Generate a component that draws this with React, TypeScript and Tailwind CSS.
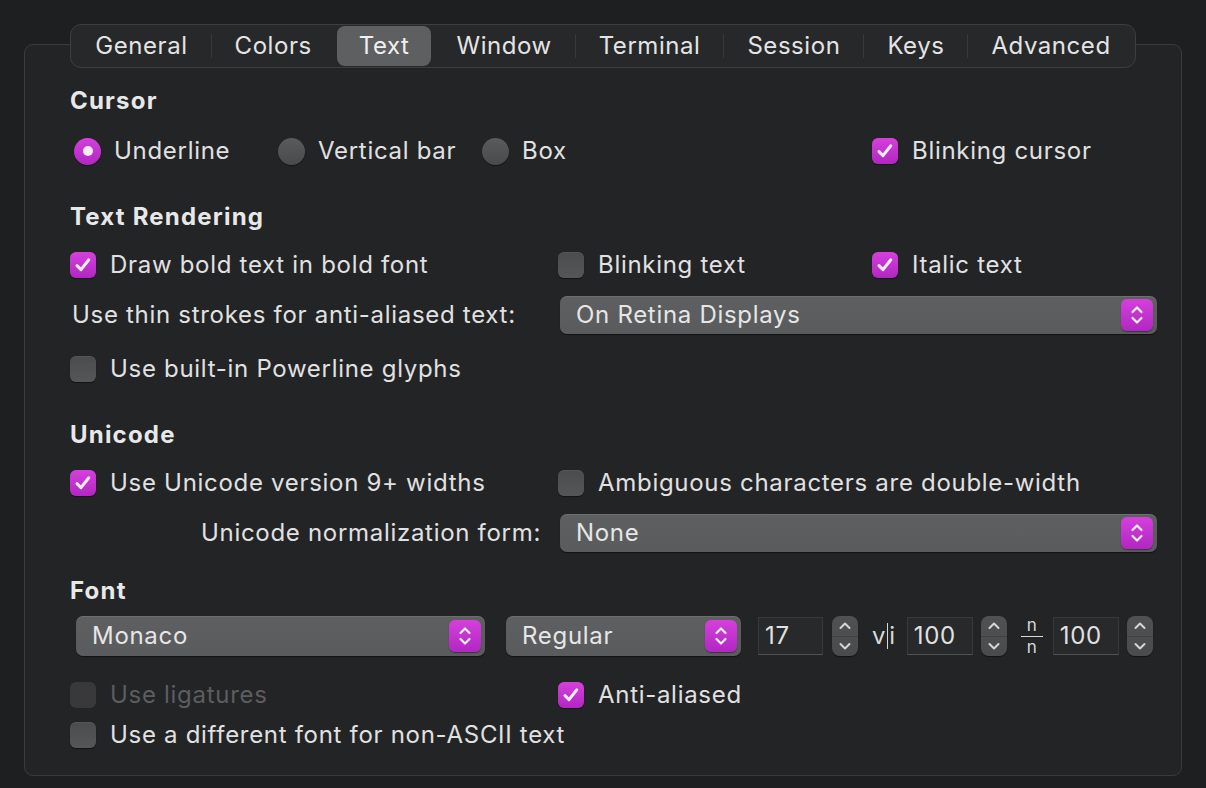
const magenta = "bg-linear-to-b from-[#d540dc] to-[#b126c2]";

function CheckMark() {
  return (
    <svg width="20" height="20" viewBox="0 0 20 20">
      <path
        d="M4 10.6 L8 14.6 L15.8 4.8"
        fill="none"
        stroke="#fbecfc"
        strokeWidth="3"
        strokeLinecap="round"
        strokeLinejoin="round"
      />
    </svg>
  );
}

function Check({
  label,
  checked = false,
  disabled = false,
}: {
  label: string;
  checked?: boolean;
  disabled?: boolean;
}) {
  return (
    <div className="flex items-center gap-[14px]">
      <span
        className={`flex h-[26px] w-[26px] shrink-0 items-center justify-center rounded-[6px] ${
          checked
            ? `${magenta} shadow-[0_1px_1px_rgba(0,0,0,0.45)]`
            : disabled
            ? "bg-[#39393b]"
            : "bg-linear-to-b from-[#4b4c4e] to-[#555658] shadow-[0_1px_1px_rgba(0,0,0,0.45),inset_0_1px_0_rgba(255,255,255,0.06)]"
        }`}
      >
        {checked && <CheckMark />}
      </span>
      <span className={disabled ? "text-[#5c5d5f]" : "text-[#e1e1e1]"}>{label}</span>
    </div>
  );
}

function Radio({ label, selected = false }: { label: string; selected?: boolean }) {
  return (
    <div className="flex items-center gap-[13px]">
      <span
        className={`flex h-[27px] w-[27px] shrink-0 items-center justify-center rounded-full ${
          selected
            ? `${magenta} shadow-[0_1px_1px_rgba(0,0,0,0.45)]`
            : "bg-linear-to-b from-[#5a5b5d] to-[#484a4c] shadow-[0_1px_1px_rgba(0,0,0,0.45)]"
        }`}
      >
        {selected && <span className="h-[10px] w-[10px] rounded-full bg-[#fbecfc]" />}
      </span>
      <span className="text-[#e1e1e1]">{label}</span>
    </div>
  );
}

function PopupArrows() {
  return (
    <svg width="32" height="32" viewBox="0 0 32 32">
      <path
        d="M11.5 13 L16 8.5 L20.5 13 M11.5 19 L16 23.5 L20.5 19"
        fill="none"
        stroke="#fdf2fe"
        strokeWidth="2.2"
        strokeLinecap="round"
        strokeLinejoin="round"
      />
    </svg>
  );
}

function Popup({ label, className }: { label: string; className: string }) {
  return (
    <div
      className={`flex items-center justify-between rounded-[7px] bg-linear-to-b from-[#5e5f61] to-[#5a5b5d] pl-[16px] pr-[4px] text-[#e6e6e6] shadow-[0_1px_1px_rgba(0,0,0,0.55),inset_0_1px_0_rgba(255,255,255,0.1)] ${className}`}
    >
      <span>{label}</span>
      <span
        className={`flex h-[32px] w-[32px] items-center justify-center rounded-[6px] ${magenta} shadow-[0_1px_1px_rgba(0,0,0,0.4)]`}
      >
        <PopupArrows />
      </span>
    </div>
  );
}

function Field({ value, className = "" }: { value: string; className?: string }) {
  return (
    <div
      className={`flex h-[38px] items-center border border-[#38393b] border-b-[#505153] bg-[#28292b] pl-[6px] text-[#e1e1e1] ${className}`}
    >
      {value}
    </div>
  );
}

function Stepper({ className = "" }: { className?: string }) {
  return (
    <div
      className={`flex h-[40px] w-[26px] flex-col items-center justify-between rounded-[8px] bg-linear-to-b from-[#505153] to-[#4a4b4d] py-[2px] shadow-[0_1px_1px_rgba(0,0,0,0.5)] ${className}`}
    >
      <svg width="16" height="16" viewBox="0 0 16 16">
        <path d="M3.5 10 L8 5.5 L12.5 10" fill="none" stroke="#d6d6d6" strokeWidth="2" strokeLinecap="round" strokeLinejoin="round" />
      </svg>
      <span className="h-px w-full bg-[#404143]" />
      <svg width="16" height="16" viewBox="0 0 16 16">
        <path d="M3.5 6 L8 10.5 L12.5 6" fill="none" stroke="#d6d6d6" strokeWidth="2" strokeLinecap="round" strokeLinejoin="round" />
      </svg>
    </div>
  );
}

const tabs = ["General", "Colors", "Text", "Window", "Terminal", "Session", "Keys", "Advanced"];

function TabBar() {
  const active = 2;
  return (
    <div className="relative z-10 mx-auto flex h-[44px] w-fit items-center rounded-[11px] border border-[#3d3e40] bg-[#27282a] px-px tracking-[0.55px]">
      {tabs.map((t, i) => (
        <div key={t} className="flex items-center">
          {i > 0 && (
            <span
              className={`h-[24px] w-px ${
                i === active || i === active + 1 ? "bg-transparent" : "bg-[#38393b]"
              }`}
            />
          )}
          {i === active ? (
            <div className="mx-px flex h-[40px] items-center rounded-[8px] bg-[#5e5f61] px-[22px] text-[#f0f0f0]">
              {t}
            </div>
          ) : (
            <div className="flex h-[40px] items-center px-[23px] text-[#e4e4e4]">{t}</div>
          )}
        </div>
      ))}
    </div>
  );
}

function Heading({ children, className = "" }: { children: string; className?: string }) {
  return (
    <div className={`flex h-[40px] items-center font-bold tracking-[1.2px] text-[#e8e8e8] ${className}`}>
      {children}
    </div>
  );
}

export default function App() {
  return (
    <div className="h-[788px] w-[1206px] overflow-hidden bg-[#1e1f21] pt-[24px] font-[Inter,'Noto_Sans',sans-serif] text-[24px] leading-none tracking-[0.7px]">
      <TabBar />
      <div className="mx-[24px] mt-[-24px] h-[732px] rounded-[9px] border border-[#3a3b3d] bg-[#232426] pl-[45px]">
        <Heading className="mt-[36px]">Cursor</Heading>

        <div className="mt-[10px] flex h-[40px] items-center">
          <div className="ml-[4px] w-[204px]">
            <Radio label="Underline" selected />
          </div>
          <div className="w-[204px]">
            <Radio label="Vertical bar" />
          </div>
          <div className="w-[390px]">
            <Radio label="Box" />
          </div>
          <Check label="Blinking cursor" checked />
        </div>

        <Heading className="mt-[26px]">Text Rendering</Heading>

        <div className="mt-[8px] flex h-[40px] items-center">
          <div className="w-[488px]">
            <Check label="Draw bold text in bold font" checked />
          </div>
          <div className="w-[314px]">
            <Check label="Blinking text" />
          </div>
          <Check label="Italic text" checked />
        </div>

        <div className="mt-[10px] flex h-[40px] items-center">
          <div className="ml-[2px] w-[488px] text-[#e1e1e1]">Use thin strokes for anti-aliased text:</div>
          <Popup label="On Retina Displays" className="h-[38px] w-[597px]" />
        </div>

        <div className="mt-[14px] flex h-[40px] items-center">
          <Check label="Use built-in Powerline glyphs" />
        </div>

        <Heading className="mt-[26px]">Unicode</Heading>

        <div className="mt-[8px] flex h-[40px] items-center">
          <div className="w-[488px]">
            <Check label="Use Unicode version 9+ widths" checked />
          </div>
          <Check label="Ambiguous characters are double-width" />
        </div>

        <div className="mt-[10px] flex h-[40px] items-center">
          <div className="w-[471px] text-right text-[#e1e1e1]">Unicode normalization form:</div>
          <Popup label="None" className="ml-[19px] h-[38px] w-[597px]" />
        </div>

        <Heading className="mt-[18px]">Font</Heading>

        <div className="mt-[5px] flex h-[40px] items-center">
          <Popup label="Monaco" className="ml-[6px] h-[40px] w-[409px]" />
          <Popup label="Regular" className="ml-[21px] h-[40px] w-[235px]" />
          <Field value="17" className="ml-[17px] w-[65px]" />
          <Stepper className="ml-[9px]" />
          <div className="ml-[14px] flex items-center text-[#d8d8d8]">
            <span>v</span>
            <span className="mx-[1px] h-[26px] w-px bg-[#d8d8d8]" />
            <span>i</span>
          </div>
          <Field value="100" className="ml-[11px] w-[66px]" />
          <Stepper className="ml-[8px]" />
          <div className="ml-[14px] flex w-[22px] flex-col items-center text-[17px] leading-[17px] tracking-normal text-[#d8d8d8]">
            <span>n</span>
            <span className="my-[2px] h-px w-full bg-[#d8d8d8]" />
            <span>n</span>
          </div>
          <Field value="100" className="ml-[10px] w-[66px]" />
          <Stepper className="ml-[8px]" />
        </div>

        <div className="mt-[19px] flex h-[40px] items-center">
          <div className="w-[488px]">
            <Check label="Use ligatures" disabled />
          </div>
          <Check label="Anti-aliased" checked />
        </div>

        <div className="flex h-[40px] items-center">
          <Check label="Use a different font for non-ASCII text" />
        </div>
      </div>
    </div>
  );
}
